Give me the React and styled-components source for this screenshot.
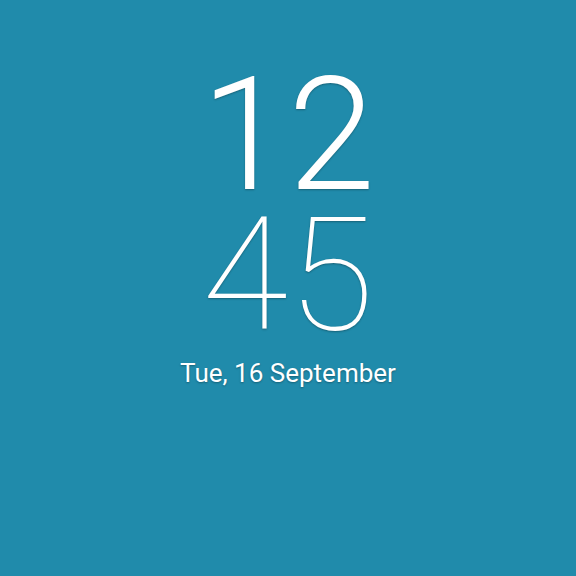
import React from "react";
import styled, { createGlobalStyle } from "styled-components";

const Global = createGlobalStyle`
  html, body { margin: 0; padding: 0; }
  body { background: #208bab; font-family: Roboto, "Noto Sans", sans-serif; }
`;

const Screen = styled.div`
  width: 576px;
  height: 576px;
  background: #208bab;
  display: flex;
  flex-direction: column;
  align-items: center;
  padding-top: 65px;
  box-sizing: border-box;
  color: #fff;
  font-family: Roboto, sans-serif;
`;

const Clock = styled.div`
  display: flex;
  flex-direction: column;
  align-items: center;
`;

const Digits = styled.div`
  font-size: 157px;
  line-height: 140px;
  font-weight: ${(p) => p.$weight};
  text-shadow: 0 1px 2px rgba(0, 0, 0, 0.3);
  letter-spacing: ${(p) => p.$spacing || 0}px;
`;

const DateLine = styled.div`
  margin-top: 13px;
  font-size: 26px;
  font-weight: 400;
  text-shadow: 0 1px 2px rgba(0, 0, 0, 0.3);
`;

export default function App() {
  return (
    <>
      <Global />
      <Screen>
        <Clock>
          <Digits $weight={300}>12</Digits>
          <Digits $weight={100}>45</Digits>
        </Clock>
        <DateLine>Tue, 16 September</DateLine>
      </Screen>
    </>
  );
}
